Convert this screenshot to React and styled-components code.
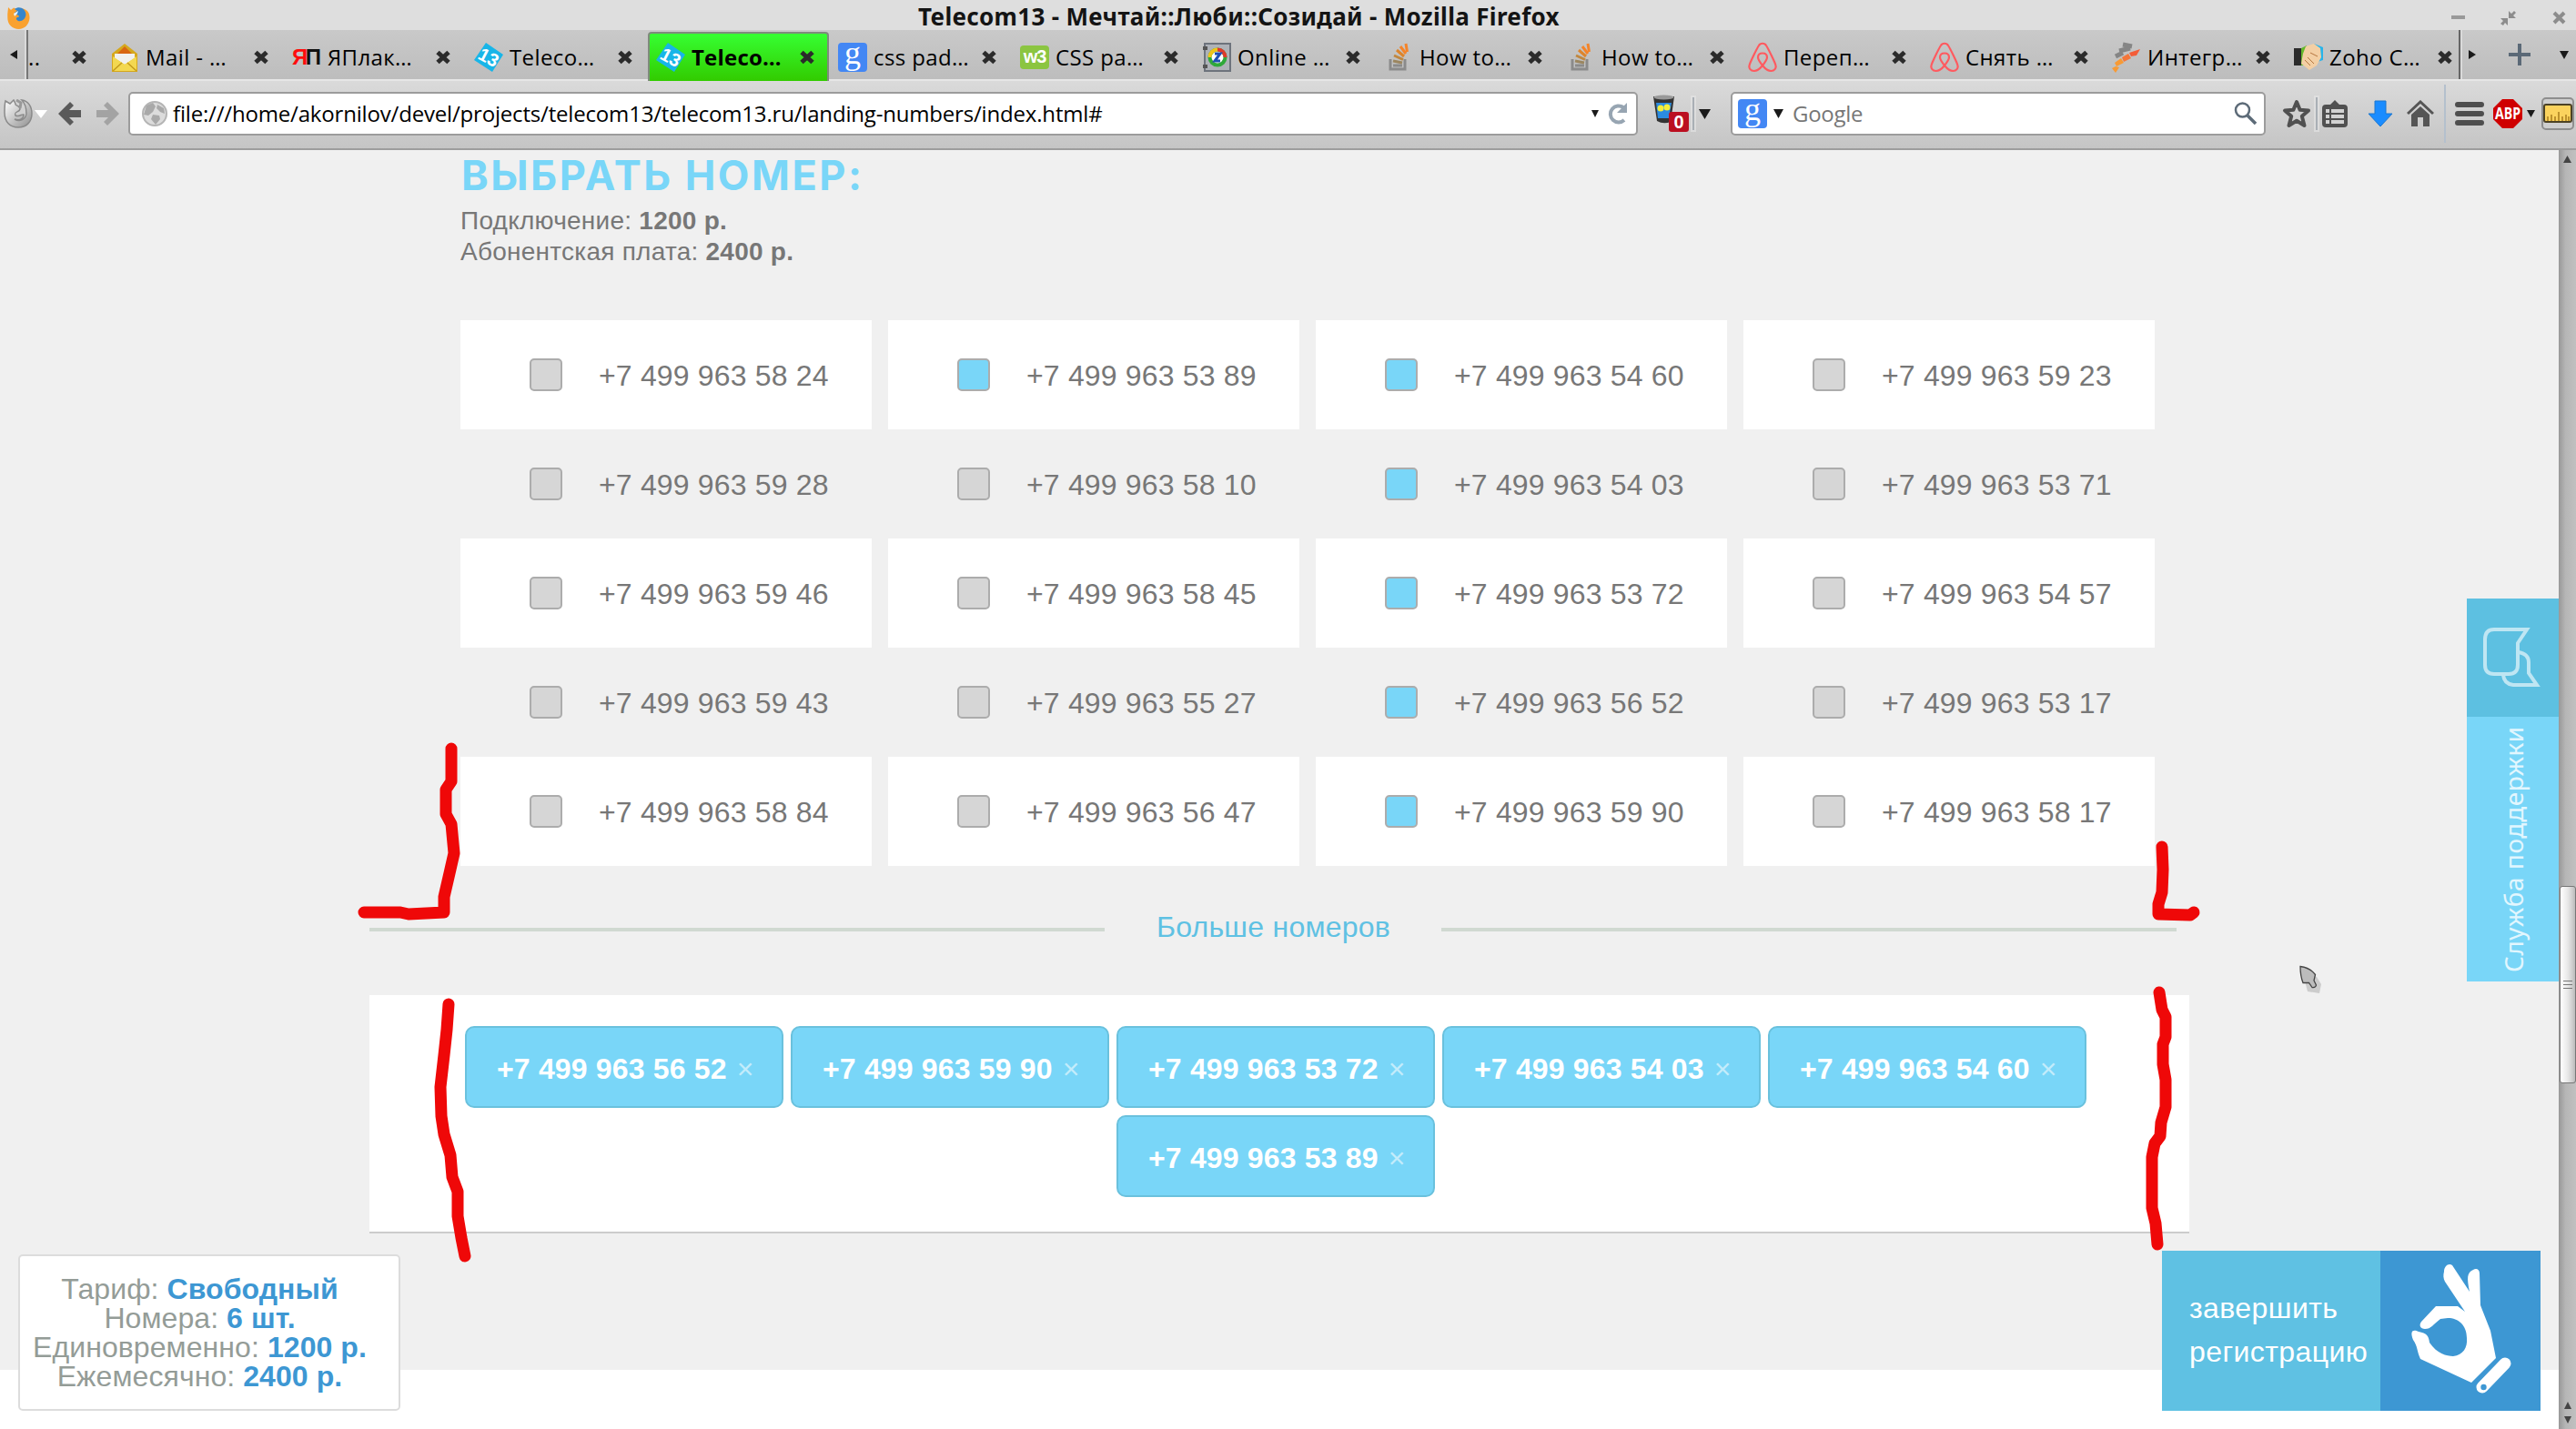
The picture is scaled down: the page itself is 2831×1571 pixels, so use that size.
import styled, { createGlobalStyle } from "styled-components";

const GlobalStyle = createGlobalStyle`
  * {
    box-sizing: border-box;
  }

  body {
    margin: 0;
    overflow: hidden;
    background: #fff;
  }
`;

const uiFont = `"Open Sans", "Noto Sans", sans-serif`;
const pageFont = `"Liberation Sans", Arial, sans-serif`;

const Window = styled.div`
  position: relative;
  display: flex;
  flex-direction: column;
  width: 2831px;
  height: 1571px;
  overflow: hidden;
  font-family: ${uiFont};
`;

/* ---------- Browser chrome ---------- */

const TitleBar = styled.div`
  display: grid;
  grid-template-columns: 109px 1fr 225px;
  height: 33px;
  flex: none;
  padding: 0 0 0 8px;
  background: #dedede;
`;

const Title = styled.div`
  font: bold 26px/36px "Noto Sans", sans-serif;
  letter-spacing: 0.32px;
  text-align: center;
  color: #141414;
  white-space: nowrap;
`;

const TitleIcon = styled.div`
  padding-top: 6px;
`;

const TitleControls = styled.div`
  display: flex;
  justify-content: flex-end;
  gap: 39px;
  padding: 11px 11px 0 0;
`;

const TabBar = styled.div`
  display: flex;
  flex: none;
  height: 56px;
  background: linear-gradient(#c9c9c9, #bdbdbd);
  border-bottom: 2px solid #e6e6e6;
`;

const ScrollTabs = styled.div`
  display: flex;
  align-items: center;
  justify-content: center;
  width: ${(p) => p.$width}px;
  ${(p) =>
    p.$side === "left"
      ? "border-right: 2px solid #777; box-shadow: inset -2px 0 #dadada;"
      : "border-left: 2px solid #666; box-shadow: inset 2px 0 #dadada;"}
`;

const CutTab = styled.div`
  display: flex;
  align-items: center;
  justify-content: space-between;
  width: 81px;
  padding: 6px 16px 0 0;
`;

const Tab = styled.div`
  display: flex;
  align-items: center;
  width: ${(p) => (p.$last ? 190 : 200)}px;
  height: 54px;
  padding: 6px ${(p) => (p.$last ? 6 : 16)}px 0 9px;
  overflow: hidden;
  ${(p) =>
    p.$active &&
    `
    width: 199px;
    height: 54px;
    margin: 2px 1px 0 0;
    padding: 0 13px 0 7px;
    border: 2px solid #7f8a7c;
    border-bottom: 0;
    border-radius: 4px 4px 0 0;
    background: linear-gradient(#36ff32, #32cb00);
  `}
`;

const TabLabel = styled.span`
  flex: 1;
  margin-left: ${(p) => (p.$cut ? 0 : 7)}px;
  font-size: 24px;
  line-height: 30px;
  font-weight: ${(p) => (p.$active ? 700 : 400)};
  letter-spacing: ${(p) => (p.$active ? 0.2 : 0.4)}px;
  white-space: nowrap;
  color: #000;
`;

const TabTools = styled.div`
  display: flex;
  align-items: center;
  gap: 31px;
  margin-left: 26px;
`;

const Toolbar = styled.div`
  display: flex;
  align-items: center;
  flex: none;
  height: 76px;
  padding: 0 0 2px 4px;
  background: linear-gradient(#dadada, #c5c5c5);
  border-bottom: 2px solid #9d9d9d;
`;

const Tool = styled.div`
  display: flex;
  align-items: center;
  flex: none;
  width: ${(p) => p.$width}px;
  margin-left: ${(p) => p.$left || 0}px;
`;

const Field = styled.div`
  display: flex;
  align-items: center;
  flex: none;
  width: ${(p) => p.$width}px;
  height: 48px;
  margin-left: ${(p) => p.$left}px;
  padding: 0 ${(p) => p.$right}px 0 ${(p) => p.$pad}px;
  border: 2px solid #9c9c9c;
  border-radius: 5px;
  background: #fff;
`;

const FieldText = styled.span`
  flex: 1;
  margin-left: ${(p) => p.$left}px;
  font-size: 24px;
  line-height: 32px;
  letter-spacing: ${(p) => p.$spacing || 0}px;
  color: ${(p) => p.$color || "#000"};
  white-space: nowrap;
`;

const Divider = styled.div`
  flex: none;
  width: 2px;
  height: ${(p) => p.$height}px;
  margin-left: ${(p) => p.$left}px;
  background: ${(p) => p.$color || "#a9afb5"};
  box-shadow: 0 0 0 2px rgba(230, 230, 230, ${(p) => (p.$color ? 0 : 0.6)});
`;

const GoogleBadge = styled.span`
  display: block;
  flex: none;
  width: 32px;
  height: 32px;
  border-radius: 4px;
  background: #4387f4;
  color: #fff;
  font: 36px/22px "Liberation Serif", serif;
  text-align: center;
`;

const W3Badge = styled.span`
  display: block;
  flex: none;
  width: 32px;
  height: 26px;
  border-radius: 4px;
  background: #8bc541;
  color: #fff;
  font: bold 20px/25px ${pageFont};
  letter-spacing: -1px;
  text-align: center;
`;

const YapBadge = styled.span`
  flex: none;
  width: 32px;
  font: bold 24px/28px ${pageFont};
  letter-spacing: -2.5px;
  color: #ff0d0d;

  b {
    color: #111;
  }
`;

/* ---------- Page ---------- */

const Viewport = styled.div`
  display: flex;
  flex: 1;
  min-height: 0;
`;

const Page = styled.main`
  flex: 1;
  background: #fff;
  font-family: ${pageFont};
`;

const Section = styled.section`
  height: 1341px;
  padding-left: 406px;
  background: #f0f0f0;
`;

const Intro = styled.header`
  padding-left: 100px;
`;

const Heading = styled.h1`
  margin: 0 0 5px 1px;
  font: 700 45px/56px Inter, sans-serif;
  letter-spacing: 2.5px;
  color: #79d6f8;
`;

const Price = styled.p`
  margin: 0;
  font-size: 28px;
  line-height: 34px;
  letter-spacing: 0.25px;
  color: #777;
`;

const Numbers = styled.div`
  display: grid;
  grid-template-columns: repeat(4, 452px);
  grid-auto-rows: 120px;
  column-gap: 18px;
  margin: 58px 0 0 100px;
`;

const NumberCell = styled.label`
  display: flex;
  align-items: center;
  padding-left: 76px;
  background: ${(p) => (p.$filled ? "#fff" : "transparent")};
`;

const Check = styled.span`
  width: 36px;
  height: 36px;
  margin-right: 40px;
  border: 2px solid #acacac;
  border-radius: 5px;
  background: ${(p) => (p.$on ? "#79d6f8" : "#d6d6d6")};
`;

const Phone = styled.span`
  padding-top: 2px;
  font-size: 32px;
  letter-spacing: 0.17px;
  color: #777;
`;

const More = styled.div`
  display: flex;
  align-items: center;
  width: 1986px;
  height: 40px;
  margin-top: 50px;
`;

const Rule = styled.span`
  flex: 1;
  height: 4px;
  background: #d0d9d1;
`;

const MoreLink = styled.a`
  width: 370px;
  padding: 0 0 5px 1px;
  text-align: center;
  font-size: 32px;
  letter-spacing: 0.25px;
  color: #5fc1e3;
`;

const Selected = styled.div`
  display: flex;
  flex-wrap: wrap;
  justify-content: center;
  align-content: flex-start;
  gap: 8px;
  width: 2000px;
  height: 262px;
  margin-top: 52px;
  padding: 34px 8px 0 0;
  background: #fff;
  border-bottom: 2px solid #ccc;
`;

const Chip = styled.div`
  display: flex;
  align-items: center;
  width: 350px;
  height: 90px;
  padding: 5px 0 0 33px;
  border: 2px solid #6ac1dd;
  border-radius: 10px;
  background: #79d6f8;
  font-size: 32px;
  font-weight: bold;
  letter-spacing: 0.17px;
  color: #fff;
`;

const Remove = styled.span`
  margin-left: 11px;
  font-weight: normal;
  color: #c3ecfb;
`;

/* ---------- Things pinned over the page ---------- */

const TariffCard = styled.aside`
  position: absolute;
  left: 20px;
  top: 1379px;
  width: 420px;
  height: 172px;
  padding: 20px 21px 0 0;
  border: 2px solid #dcdcdc;
  border-radius: 5px;
  background: rgba(255, 255, 255, 0.95);
  font-family: ${pageFont};
  font-size: 32px;
  line-height: 32px;
  letter-spacing: 0.08px;
  text-align: center;
  white-space: nowrap;
  color: #949c97;

  b {
    color: #3d97d3;
  }
`;

const FinishButton = styled.a`
  position: absolute;
  left: 2376px;
  top: 1375px;
  display: flex;
  width: 416px;
  height: 176px;
  background: #3d97d3;
  font-family: ${pageFont};
`;

const FinishLabel = styled.span`
  width: 240px;
  padding: 39px 0 0 30px;
  background: #5fc1e3;
  color: #fff;
  font-size: 32px;
  line-height: 48px;
  letter-spacing: 0.42px;
`;

const Support = styled.a`
  position: absolute;
  right: 19px;
  top: 658px;
  width: 101px;
  height: 421px;
  display: flex;
  flex-direction: column;
  background: #79d6f8;
`;

const SupportIcon = styled.div`
  height: 130px;
  padding: 32px 0 0 18px;
  background: #5dc0e1;
`;

const SupportText = styled.span`
  writing-mode: vertical-rl;
  transform: rotate(180deg);
  width: 101px;
  height: 291px;
  padding: 10px 0 0;
  line-height: 102px;
  font-family: "Noto Sans", sans-serif;
  font-size: 28px;
  letter-spacing: 0.5px;
  white-space: nowrap;
  color: #e2f6fe;
`;

const Scrollbar = styled.div`
  display: flex;
  flex-direction: column;
  align-items: center;
  width: 19px;
  padding: 6px 0 6px;
  background: linear-gradient(90deg, #989898, #b6b6b6 40%, #c0c0c0);
`;

const Thumb = styled.div`
  display: flex;
  flex-direction: column;
  align-items: center;
  justify-content: center;
  gap: 3px;
  width: 18px;
  height: 217px;
  margin: 795px 0 auto 1px;
  border: 1px solid #777;
  border-radius: 3px;
  background: linear-gradient(90deg, #fff, #e8e8e8 50%, #bcbcbc);
`;

const Grip = styled.i`
  width: 10px;
  height: 1px;
  background: #777;
`;

const ScrollArrows = styled.div`
  display: flex;
  flex-direction: column;
  gap: 8px;
`;

const Overlay = styled.svg`
  position: absolute;
  left: 0;
  top: 0;
  pointer-events: none;
`;

/* ---------- Icons ---------- */

const Close = () => (
  <svg width="18" height="18" viewBox="0 0 18 18">
    <path d="M3 3.500 15 14.500M15 3.500 3 14.500" stroke="#2b2b2b" strokeWidth="5" />
  </svg>
);

const Caret = ({ w = 12, h = 10, dir = "down", color = "#1a1a1a" }) => {
  const points = {
    down: `0,0 ${w},0 ${w / 2},${h}`,
    up: `0,${h} ${w},${h} ${w / 2},0`,
    left: `${w},0 ${w},${h} 0,${h / 2}`,
    right: `0,0 0,${h} ${w},${h / 2}`,
  };
  return (
    <svg width={w} height={h} display="block">
      <polygon points={points[dir]} fill={color} />
    </svg>
  );
};

const FirefoxLogo = () => (
  <svg width="25" height="26" viewBox="0 0 25 26">
    <path d="M1 2 4 5 7 2.500 10 4C20 1 25 7 24.500 14 24 21 19 26 12.500 26 6 26 0 21 .3 13 0 8 1 5 1 2Z" fill="#f9a12f" />
    <path d="M8 4C13 0 20 3 20.500 10 20 15 16 18 12 17 10 16 9 14 11 13 15 13 12 10 10 10 7 9 8 7 11 6Z" fill="#3585cc" />
    <path d="M7 9 12 6 11 9 8 12Z" fill="#e8f2fa" />
  </svg>
);

const GreyFox = () => (
  <svg width="32" height="32" viewBox="0 0 32 32">
    <defs>
      <linearGradient id="fox" x1="0" y1="0" x2="1" y2="1">
        <stop offset="0" stopColor="#fff" />
        <stop offset="1" stopColor="#8f8f8f" />
      </linearGradient>
    </defs>
    <path d="M2 2 7 5 11 1 13 5C12 8 18 6 18 11 17 15 11 13 13 18 17 20 20 16 22 17 22 22 17 24 12 22 17 25 24 23 25 16 25 10 24 5 20 1 27 2 31 8 31 16 31 25 25 31 16 31 7 31 1 25 1 15 1 9 1 6 2 2Z" fill="url(#fox)" stroke="#8a8a8a" strokeWidth="1.500" />
    <path d="M14 1 19 4 18 10" fill="none" stroke="#999" strokeWidth="3" />
  </svg>
);

const Arrow = ({ color, flip }) => (
  <svg width="25" height="28" viewBox="0 0 25 28" transform={flip ? "scale(-1 1)" : undefined}>
    <path d="M0 14 13 1 17 5 12 10H25V18H12L17 23 13 27Z" fill={color} />
  </svg>
);

const Globe = () => (
  <svg width="28" height="28" viewBox="0 0 28 28">
    <circle cx="14" cy="14" r="13" fill="#dcdcdc" stroke="#b5b5b5" strokeWidth="2" />
    <path d="M5 5 12 2 15 6 12 12 7 16 2 15ZM17 4 24 8 25 14 20 12 16 8ZM12 15 19 16 20 20 15 26 10 20Z" fill="#a9a9a9" />
  </svg>
);

const Reload = () => (
  <svg width="24" height="26" viewBox="0 0 24 26">
    <path d="M19 20A9 9 0 1 1 18 6" fill="none" stroke="#97a5b2" strokeWidth="4" />
    <path d="M22 1V12H11Z" fill="#97a5b2" />
  </svg>
);

const Bin = () => (
  <svg width="40" height="42" viewBox="0 0 40 42">
    <path d="M1 2H24L20 30Q12 33 5 29Z" fill="#333" />
    <ellipse cx="12.500" cy="3" rx="11" ry="2.500" fill="#999" />
    <path d="M4 9H21L18 26H6Z" fill="#2b8be0" />
    <circle cx="9" cy="15" r="3.500" fill="#f4ee3a" />
    <circle cx="16" cy="14" r="3.500" fill="#f4ee3a" />
    <rect x="18" y="19" width="22" height="22" rx="3" fill="#bb0f20" />
    <text x="29" y="37" textAnchor="middle" fontFamily="Liberation Sans" fontWeight="bold" fontSize="20" fill="#fff">0</text>
  </svg>
);

const Search = () => (
  <svg width="26" height="26" viewBox="0 0 26 26">
    <circle cx="9.500" cy="9" r="7.500" fill="none" stroke="#5d6b78" strokeWidth="2.500" />
    <path d="M15 15 24 24" stroke="#5d6b78" strokeWidth="3.500" />
  </svg>
);

const Star = () => (
  <svg width="32" height="34" viewBox="0 0 32 34">
    <path d="M16 4 19.600 12.800 29 13.500 21.800 19.800 24.500 30 16 24.800 7.500 30 10.200 19.800 3 13.500 12.400 12.800Z" fill="none" stroke="#505050" strokeWidth="4" strokeLinejoin="round" />
  </svg>
);

const Clipboard = () => (
  <svg width="28" height="32" viewBox="0 0 28 32">
    <path d="M9 6 14 1 19 6H24Q28 6 28 10V27Q28 31 24 31H4Q0 31 0 27V10Q0 6 4 6Z" fill="#505050" />
    <path d="M4 11H8V15H4ZM10 11H24V15H10ZM4 17H8V21H4ZM10 17H24V21H10ZM4 23H8V27H4ZM10 23H24V27H10Z" fill="#d2d2d2" />
  </svg>
);

const Download = () => (
  <svg width="28" height="30" viewBox="0 0 28 30">
    <path d="M8 1H20V15H27L14 29 1 15H8Z" fill="#1a8cff" stroke="#1b76cf" strokeWidth="1" />
  </svg>
);

const Home = () => (
  <svg width="30" height="30" viewBox="0 0 30 30">
    <path d="M1 15 15 2 29 15" fill="none" stroke="#555" strokeWidth="3" />
    <path d="M5 16 15 7 25 16V29H18V19H12V29H5Z" fill="#555" />
  </svg>
);

const Menu = () => (
  <svg width="32" height="28" viewBox="0 0 32 28">
    <path d="M3 4H29M3 14H29M3 24H29" stroke="#4e4e4e" strokeWidth="6" strokeLinecap="round" />
  </svg>
);

const Abp = () => (
  <svg width="32" height="32" viewBox="0 0 32 32">
    <path d="M10 0H22L32 10V22L22 32H10L0 22V10Z" fill="#cf0000" />
    <text x="16" y="22" textAnchor="middle" textLength="28" lengthAdjust="spacingAndGlyphs" fontFamily="Open Sans" fontWeight="bold" fontSize="17" fill="#fff">ABP</text>
  </svg>
);

const Ruler = () => (
  <svg width="36" height="36" viewBox="0 0 36 36">
    <rect x="1" y="1" width="34" height="34" rx="4" fill="#cfcfcf" stroke="#8e8e8e" strokeWidth="2" />
    <rect x="3" y="8" width="30" height="19" rx="2" fill="#fbd35e" stroke="#4c4225" strokeWidth="2" />
    <path d="M7 26V21M11 26V19M15 26V21M19 26V16M23 26V21M27 26V19M30 26V21" stroke="#a97d1d" strokeWidth="1.500" />
  </svg>
);

const MailIcon = () => (
  <svg width="32" height="32" viewBox="0 0 32 32">
    <path d="M2 12 16 1 30 12V32H2Z" fill="#d6a81c" />
    <path d="M7 13 16 4 25 13Z" fill="#d96712" />
    <path d="M5 12H27V17L16 24 5 17Z" fill="#f1f1ee" />
    <path d="M3 15 16 24 29 15V31H3Z" fill="#f3d850" />
    <path d="M3 31 13 22M29 31 19 22" stroke="#c39a1b" strokeWidth="1.500" />
  </svg>
);

const ThirteenIcon = () => (
  <svg width="32" height="32" viewBox="0 0 32 32">
    <path d="M13 0 32 13 20 32 0 19Z" fill="#18b5e8" />
    <text x="16" y="23" textAnchor="middle" transform="rotate(28 16 16)" fontFamily="Liberation Sans" fontWeight="bold" fontSize="20" fill="#fff">13</text>
  </svg>
);

const SafeIcon = () => (
  <svg width="32" height="32" viewBox="0 0 32 32">
    <rect x="3" y="1" width="28" height="30" fill="#aeb2b8" stroke="#6d737c" strokeWidth="2" />
    <path d="M1 6H6M1 26H6" stroke="#555" strokeWidth="4" />
    <circle cx="17" cy="16" r="8.500" fill="#fff" stroke="#2fa83a" strokeWidth="4" />
    <path d="M8.500 16A8.500 8.500 0 0 1 17 7.500" fill="none" stroke="#f0c419" strokeWidth="4" />
    <path d="M17 7.500A8.500 8.500 0 0 1 25.500 16" fill="none" stroke="#df3a2b" strokeWidth="4" />
    <path d="M14 12H20L14 20H20" fill="none" stroke="#1f4fb4" strokeWidth="3" />
  </svg>
);

const StackIcon = () => (
  <svg width="32" height="32" viewBox="0 0 32 32">
    <path d="M7 18V29H23V18" fill="none" stroke="#8b8b8b" strokeWidth="3" />
    <path d="M10 25H20" stroke="#8b8b8b" strokeWidth="3" />
    <path d="M10 20 20 22" stroke="#9b8660" strokeWidth="3" />
    <path d="M11 14 21 18.500" stroke="#c0873f" strokeWidth="3" />
    <path d="M14 8 22 15" stroke="#dd852c" strokeWidth="3" />
    <path d="M18 4 24 12M24 1 25.500 10" stroke="#f4842a" strokeWidth="3" />
  </svg>
);

const AirbnbIcon = () => (
  <svg width="32" height="34" viewBox="0 0 32 34">
    <path
      d="M16 26C12 21 11 19 11 17 11 14 13 12.500 16 12.500S21 14 21 17C21 19 20 21 16 26ZM16 26C12 31 9 32 6.500 32 3 32 .8 29 1.500 26 2 23 10 7 12 4 13.500 1 18.500 1 20 4 22 7 30 23 30.500 26 31.200 29 29 32 25.500 32 23 32 20 31 16 26Z"
      fill="none"
      stroke="#ff5a5f"
      strokeWidth="2.200"
    />
  </svg>
);

const FanIcon = () => (
  <svg width="32" height="34" viewBox="0 0 32 34">
    <path d="M12 3 22 5M8 10 20 7M4 16 12 12" stroke="#858585" strokeWidth="5" />
    <path d="M19 12 31 8 27 15 21 16Z" fill="#f45d38" />
    <path d="M11 17 18 13 21 18 13 22Z" fill="#f4763a" />
    <path d="M3 23 10 18 13 23 5 27ZM0 29 4 27 8 28 4 34Z" fill="#f79a35" />
  </svg>
);

const ZohoIcon = () => (
  <svg width="32" height="30" viewBox="0 0 32 30">
    <path d="M0 5H10V24H0Z" fill="#2b2b2b" />
    <path d="M8 5 14 2 12 24H8Z" fill="#64b82c" />
    <path d="M22 0 32 4V18L26 20Z" fill="#28b4ea" />
    <path d="M13 3 22 0 29 5 30 15 25 24 17 29 8 22 10 11Z" fill="#f3cfa4" />
    <path d="M12 18 18 24M15 15 22 22M18 10 26 14" stroke="#b5763f" strokeWidth="1" />
  </svg>
);

const BubblesIcon = () => (
  <svg width="64" height="66" viewBox="0 0 64 66" fill="none" stroke="#bfe6f3" strokeWidth="4">
    <path d="M12 2H48L38 17V41Q38 51 28 51H12Q2 51 2 41V13Q2 2 12 2Z" />
    <path d="M39 27Q50 29 50 38V50L59 63H33Q23 62 22 52" />
  </svg>
);

const HandIcon = () => (
  <svg width="176" height="176" viewBox="0 0 176 176">
    <path
      d="M70 23C70 17 75 13 79 16L98 45C95 30 95 24 102 21 105 19 109 20 109 25L110 60 121 88 127 118 100 145 44 119C40 110 41 105 36 98 32 88 36 86 42 89 51 91 53 93 54 101 62 113 73 116 80 116 91 115 96 106 95 96 95 82 86 74 74 74L66 75C58 81 56 86 49 86 44 86 42 82 45 78L61 61H85L93 67 71 34C69 30 69 27 70 23Z"
      fill="#fff"
    />
    <path d="M112 150 137 124" stroke="#fff" strokeWidth="13" strokeLinecap="round" />
    <circle cx="113.500" cy="150" r="3.200" fill="#3d97d3" />
  </svg>
);

/* ---------- Data ---------- */

const tabs = [
  { icon: <MailIcon />, label: "Mail - …" },
  { icon: <YapBadge>Я<b>П</b></YapBadge>, label: "ЯПлак…" },
  { icon: <ThirteenIcon />, label: "Teleco…" },
  { icon: <ThirteenIcon />, label: "Teleco…", active: true },
  { icon: <GoogleBadge>g</GoogleBadge>, label: "css pad…" },
  { icon: <W3Badge>w3</W3Badge>, label: "CSS pa…" },
  { icon: <SafeIcon />, label: "Online …" },
  { icon: <StackIcon />, label: "How to…" },
  { icon: <StackIcon />, label: "How to…" },
  { icon: <AirbnbIcon />, label: "Переп…" },
  { icon: <AirbnbIcon />, label: "Снять …" },
  { icon: <FanIcon />, label: "Интегр…" },
  { icon: <ZohoIcon />, label: "Zoho C…", last: true },
];

const numbers = [
  ["58 24", "53 89", "54 60", "59 23"],
  ["59 28", "58 10", "54 03", "53 71"],
  ["59 46", "58 45", "53 72", "54 57"],
  ["59 43", "55 27", "56 52", "53 17"],
  ["58 84", "56 47", "59 90", "58 17"],
];

const selected = ["56 52", "59 90", "53 72", "54 03", "54 60", "53 89"];

const strokes = [
  "496,823 496,859 490,868 490,895 496,906 499,938 494,960 488,986 488,1003 449,1005 440,1003 400,1003",
  "493,1104 491,1132 488,1160 484,1195 485,1227 488,1247 495,1270 497,1294 503,1310 503,1337 507,1361 511,1381",
  "2376,931 2377,956 2376,981 2372,994 2372,1005 2407,1006 2411,1003",
  "2373,1091 2376,1110 2380,1118 2380,1140 2377,1148 2377,1170 2380,1187 2380,1217 2375,1234 2374,1249 2368,1257 2365,1272 2365,1328 2369,1345 2371,1368",
];

function BrowserChrome() {
  return (
    <>
      <TitleBar>
        <TitleIcon>
          <FirefoxLogo />
        </TitleIcon>
        <Title>Telecom13 - Мечтай::Люби::Созидай - Mozilla Firefox</Title>
        <TitleControls>
          <svg width="15" height="18">
            <path d="M0 8H15" stroke="#999" strokeWidth="4" />
          </svg>
          <svg width="18" height="18">
            <path d="M9 9V1L12 4 15 1 17 3 14 6 17 9ZM8 9V17L5 14 3 17 0 15 3 12 0 9Z" fill="#8c8c8c" />
          </svg>
          <svg width="15" height="18">
            <path d="M2 3 13 14M13 3 2 14" stroke="#8c8c8c" strokeWidth="4" />
          </svg>
        </TitleControls>
      </TitleBar>

      <TabBar>
        <ScrollTabs $width={31} $side="left">
          <Caret w={8} h={10} dir="left" />
        </ScrollTabs>
        <CutTab>
          <TabLabel $cut>..</TabLabel>
          <Close />
        </CutTab>
        {tabs.map((tab, i) => (
          <Tab key={i} $active={tab.active} $last={tab.last}>
            {tab.icon}
            <TabLabel $active={tab.active}>{tab.label}</TabLabel>
            <Close />
          </Tab>
        ))}
        <ScrollTabs $width={28} $side="right">
          <Caret w={8} h={10} dir="right" />
        </ScrollTabs>
        <TabTools>
          <svg width="26" height="26">
            <path d="M13 1V25M1 13H25" stroke="#5b6977" strokeWidth="4" />
          </svg>
          <Caret w={10} h={9} />
        </TabTools>
      </TabBar>

      <Toolbar>
        <Tool $width={32}><GreyFox /></Tool>
        <Tool $width={14} $left={2}><Caret w={14} h={9} color="#fff" /></Tool>
        <Tool $width={25} $left={12}><Arrow color="#5a5a5a" /></Tool>
        <Tool $width={25} $left={17}><Arrow color="#a3a3a3" flip /></Tool>
        <Field $width={1659} $left={10} $pad={13} $right={8}>
          <Globe />
          <FieldText $left={6} $spacing={-0.18}>
            file:///home/akornilov/devel/projects/telecom13/telecom13.ru/landing-numbers/index.html#
          </FieldText>
          <Caret w={8} h={8} />
          <Tool $width={24} $left={9}><Reload /></Tool>
        </Field>
        <Tool $width={40} $left={16}><Bin /></Tool>
        <Divider $left={4} $height={36} />
        <Tool $width={13} $left={5}><Caret w={13} h={11} /></Tool>
        <Field $width={588} $left={22} $pad={6} $right={7}>
          <GoogleBadge>g</GoogleBadge>
          <Tool $width={11} $left={7}><Caret w={11} h={10} /></Tool>
          <FieldText $left={10} $spacing={-0.3} $color="#777">Google</FieldText>
          <Search />
        </Field>
        <Tool $width={32} $left={18}><Star /></Tool>
        <Divider $left={5} $height={36} />
        <Tool $width={28} $left={5}><Clipboard /></Tool>
        <Tool $width={28} $left={22}><Download /></Tool>
        <Tool $width={30} $left={15}><Home /></Tool>
        <Divider $left={11} $height={64} $color="#b4c0cd" />
        <Tool $width={32} $left={10}><Menu /></Tool>
        <Tool $width={32} $left={10}><Abp /></Tool>
        <Tool $width={9} $left={5}><Caret w={9} h={8} /></Tool>
        <Tool $width={36} $left={7}><Ruler /></Tool>
      </Toolbar>
    </>
  );
}

function NumberPicker() {
  return (
    <Section>
      <Intro>
        <Heading>ВЫБРАТЬ НОМЕР:</Heading>
        <Price>Подключение: <b>1200 р.</b></Price>
        <Price>Абонентская плата: <b>2400 р.</b></Price>
      </Intro>

      <Numbers>
        {numbers.map((row, r) =>
          row.map((n) => (
            <NumberCell key={n} $filled={r % 2 === 0}>
              <Check $on={selected.includes(n)} />
              <Phone>+7 499 963 {n}</Phone>
            </NumberCell>
          ))
        )}
      </Numbers>

      <More>
        <Rule />
        <MoreLink>Больше номеров</MoreLink>
        <Rule />
      </More>

      <Selected>
        {selected.map((n) => (
          <Chip key={n}>
            +7 499 963 {n}
            <Remove>×</Remove>
          </Chip>
        ))}
      </Selected>
    </Section>
  );
}

function App() {
  return (
    <Window>
      <GlobalStyle />
      <BrowserChrome />

      <Viewport>
        <Page>
          <NumberPicker />
        </Page>
        <Scrollbar>
          <Caret w={9} h={8} dir="up" color="#444" />
          <Thumb>
            <Grip />
            <Grip />
            <Grip />
          </Thumb>
          <ScrollArrows>
            <Caret w={8} h={8} dir="up" color="#444" />
            <Caret w={8} h={8} color="#444" />
          </ScrollArrows>
        </Scrollbar>
      </Viewport>

      <TariffCard>
        <div>Тариф: <b>Свободный</b></div>
        <div>Номера: <b>6 шт.</b></div>
        <div>Единовременно: <b>1200 р.</b></div>
        <div>Ежемесячно: <b>2400 р.</b></div>
      </TariffCard>

      <FinishButton>
        <FinishLabel>завершить регистрацию</FinishLabel>
        <HandIcon />
      </FinishButton>

      <Support>
        <SupportIcon>
          <BubblesIcon />
        </SupportIcon>
        <SupportText>Служба поддержки</SupportText>
      </Support>

      {/* red marker annotations and the mouse pointer */}
      <Overlay width="2831" height="1571">
        {strokes.map((points) => (
          <polyline
            key={points}
            points={points}
            fill="none"
            stroke="#ef0808"
            strokeWidth="13"
            strokeLinecap="round"
            strokeLinejoin="round"
          />
        ))}
        <path d="M2530 1067 2546 1074 2551 1082 2549 1092 2536 1090Z" fill="#000" opacity="0.15" />
        <path
          d="M2528 1062.500Q2539 1064 2544.500 1071.500L2543 1078 2545.500 1083Q2545 1086 2541 1085.500L2537.500 1080.500H2531Q2528 1073 2528 1062.500Z"
          fill="#bcbcbc"
          stroke="#444"
          strokeWidth="1.300"
        />
      </Overlay>
    </Window>
  );
}

export default App;
